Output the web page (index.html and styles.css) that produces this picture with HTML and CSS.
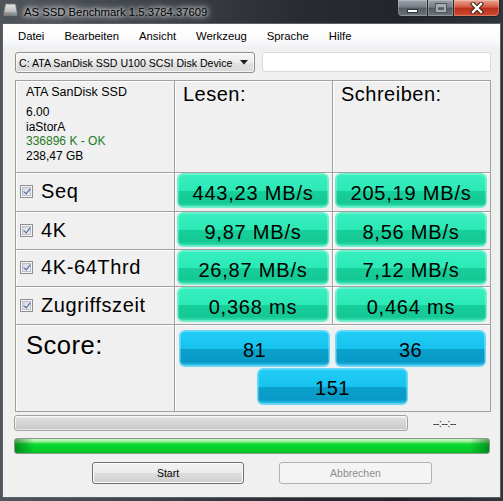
FILE: index.html
```html
<!DOCTYPE html>
<html>
<head>
<meta charset="utf-8">
<link rel="stylesheet" href="styles.css">
</head>
<body>
<div class="window">
  <div class="titlebar">
    <svg class="app-icon" width="15" height="14" viewBox="0 0 15 14">
      <defs>
        <linearGradient id="dg" x1="0" y1="0" x2="0" y2="1">
          <stop offset="0" stop-color="#e6e6e6"/>
          <stop offset="1" stop-color="#a9a9a9"/>
        </linearGradient>
      </defs>
      <path d="M2.5 1 H12.5 L14 9 V12.5 H1 V9 Z" fill="url(#dg)" stroke="#7a7a7a" stroke-width="0.8"/>
      <rect x="1.5" y="9.5" width="12" height="2.5" fill="#8a8a8a"/>
      <rect x="10.5" y="10.2" width="2" height="1" fill="#4fc3ff"/>
    </svg>
    <span class="title">AS SSD Benchmark 1.5.3784.37609</span>
    <div class="caption">
      <div class="cbtn min"><span class="min-glyph"></span></div>
      <div class="cbtn max"><span class="max-glyph"></span></div>
      <div class="cbtn close">
        <svg width="14" height="12" viewBox="0 0 14 12">
          <path d="M3 2 L11 10 M11 2 L3 10" stroke="#3a1d14" stroke-width="4.4" stroke-linecap="square"/>
          <path d="M3 2 L11 10 M11 2 L3 10" stroke="#ffffff" stroke-width="2.4" stroke-linecap="square"/>
        </svg>
      </div>
    </div>
  </div>
  <div class="client">
    <nav class="menubar">
      <span>Datei</span>
      <span>Bearbeiten</span>
      <span>Ansicht</span>
      <span>Werkzeug</span>
      <span>Sprache</span>
      <span>Hilfe</span>
    </nav>
    <div class="toolbar">
      <div class="combo">
        <span class="combo-text">C: ATA SanDisk SSD U100 SCSI Disk Device</span>
        <svg class="combo-arrow" width="8" height="5" viewBox="0 0 8 5"><path d="M0 0 H8 L4 4.5 Z" fill="#1a1a1a"/></svg>
      </div>
      <div class="textbox"></div>
    </div>
    <div class="grid">
      <div class="cell info">
        <div class="info-name">ATA SanDisk SSD</div>
        <div class="info-line first">6.00</div>
        <div class="info-line">iaStorA</div>
        <div class="info-line ok">336896 K - OK</div>
        <div class="info-line">238,47 GB</div>
      </div>
      <div class="cell head">Lesen:</div>
      <div class="cell head">Schreiben:</div>

      <div class="cell label"><span class="check"></span><span>Seq</span></div>
      <div class="cell result"><div class="res green">443,23 MB/s</div></div>
      <div class="cell result"><div class="res green">205,19 MB/s</div></div>

      <div class="cell label"><span class="check"></span><span>4K</span></div>
      <div class="cell result"><div class="res green">9,87 MB/s</div></div>
      <div class="cell result"><div class="res green">8,56 MB/s</div></div>

      <div class="cell label"><span class="check"></span><span>4K-64Thrd</span></div>
      <div class="cell result"><div class="res green">26,87 MB/s</div></div>
      <div class="cell result"><div class="res green">7,12 MB/s</div></div>

      <div class="cell label"><span class="check"></span><span>Zugriffszeit</span></div>
      <div class="cell result"><div class="res green">0,368 ms</div></div>
      <div class="cell result"><div class="res green">0,464 ms</div></div>

      <div class="cell score-label">Score:</div>
      <div class="cell score">
        <div class="res blue">81</div>
        <div class="res blue">36</div>
        <div class="res blue">151</div>
      </div>
    </div>
    <div class="progress-row">
      <div class="pbar grey"></div>
      <span class="time">--:--:--</span>
    </div>
    <div class="pbar green-bar"></div>
    <div class="buttons">
      <div class="btn">Start</div>
      <div class="btn disabled">Abbrechen</div>
    </div>
  </div>
</div>
</body>
</html>
```
FILE: styles.css
```css
* { box-sizing: border-box; }
html, body { margin: 0; padding: 0; }
body {
  width: 503px;
  height: 501px;
  overflow: hidden;
  background: #23272c;
  font-family: "Liberation Sans", Arial, sans-serif;
}
.window {
  width: 503px;
  height: 501px;
  display: flex;
  flex-direction: column;
  background: linear-gradient(90deg, #50555c 0%, #3e4349 30%, #282c31 60%, #22262b 80%, #30353b 100%);
}
.titlebar {
  flex: none;
  height: 24px;
  display: flex;
  align-items: flex-start;
}
.app-icon { flex: none; margin: 3px 0 0 3px; }
.title {
  margin: 5px 0 0 6px;
  font-size: 11.3px;
  line-height: 14px;
  color: #000;
  white-space: nowrap;
  text-shadow: 0 0 4px #fff, 0 0 7px rgba(255,255,255,.85), 0 0 12px rgba(255,255,255,.6);
}
.caption {
  margin-left: auto;
  margin-right: 3px;
  display: flex;
  height: 17px;
}
.cbtn {
  height: 17px;
  border: 1px solid #1f2327;
  border-top: none;
  display: flex;
  align-items: center;
  justify-content: center;
  box-shadow: inset 0 0 0 1px rgba(255,255,255,.25);
}
.min {
  width: 30px;
  border-right: none;
  border-radius: 0 0 0 5px;
  background: linear-gradient(#9aa1a8, #767d84 45%, #545b62 50%, #6c747c);
}
.max {
  width: 26px;
  border-right: none;
  background: linear-gradient(#9aa1a8, #767d84 45%, #545b62 50%, #6c747c);
}
.close {
  width: 47px;
  border-radius: 0 0 5px 0;
  background: linear-gradient(#e9a593, #d4593f 45%, #b8301a 50%, #cf4c30);
}
.min-glyph {
  width: 11px;
  height: 4px;
  margin-top: 5px;
  background: #fff;
  border: 1px solid #2e3236;
}
.max-glyph {
  width: 10px;
  height: 8px;
  border: 2px solid #a7adb3;
  border-top-width: 3px;
  box-shadow: 0 0 0 1px #50565c;
}
.client {
  flex: none;
  height: 473px;
  margin: 0 3px;
  background: #f0f0f0;
  box-shadow: 0 0 0 1px #5d6268;
}
.menubar {
  height: 24px;
  display: flex;
  gap: 20px;
  padding: 1px 0 0 15px;
  font-size: 11.3px;
  line-height: 23px;
  color: #000;
  background: linear-gradient(#ffffff, #fbfbfc 60%, #f1f2f4);
}
.toolbar {
  display: flex;
  gap: 7px;
  margin: 4px 0 0 12px;
  height: 21px;
}
.combo {
  width: 240px;
  height: 21px;
  border: 1px solid #8e8f8f;
  border-radius: 3px;
  background: linear-gradient(#f6f6f6, #ebebeb 50%, #e1e1e1 51%, #d9d9d9);
  display: flex;
  align-items: center;
  padding: 0 6px 0 3px;
  box-shadow: inset 0 0 0 1px rgba(255,255,255,.7);
}
.combo-text {
  font-size: 10.6px;
  color: #000;
  white-space: nowrap;
  overflow: hidden;
  flex: 1;
}
.combo-arrow { flex: none; margin-left: 4px; }
.textbox {
  width: 229px;
  height: 20px;
  background: #fff;
  border: 1px solid #d6d9dd;
  border-radius: 2px;
}
.grid {
  margin: 7px 0 0 12px;
  width: 476px;
  display: grid;
  grid-template-columns: 158px 157px 157px;
  grid-template-rows: 91px 38px 37px 36px 37px 86px;
  gap: 1px;
  padding: 1px;
  background: #a0a0a0;
}
.cell {
  background: #f0f0f0;
  box-shadow: inset 1px 1px 0 #fff;
}
.info { padding: 4px 0 0 10px; color: #000; }
.info-name { font-size: 12.5px; line-height: 15px; }
.info-line { font-size: 12px; line-height: 14.7px; }
.info-line.first { margin-top: 5px; }
.info-line.ok { color: #1d7a1d; }
.head {
  padding: 2px 0 0 8px;
  font-size: 20px;
  line-height: 23px;
  letter-spacing: 0.5px;
  color: #000;
}
.label {
  display: flex;
  align-items: center;
  padding: 0 0 1px 4px;
  gap: 8px;
  font-size: 20px;
  line-height: 23px;
  letter-spacing: 0.6px;
  color: #000;
}
.check {
  flex: none;
  width: 13px;
  height: 13px;
  border: 1px solid #8f8f8f;
  background: #f4f4f4;
  position: relative;
}
.check::before {
  content: "";
  position: absolute;
  left: 1px; top: 1px; right: 1px; bottom: 1px;
  background: linear-gradient(135deg, #d4d7e0, #f0f1f5);
  border: 1px solid #bcbfc8;
}
.check::after {
  content: "";
  position: absolute;
  left: 4px;
  top: 1px;
  width: 3px;
  height: 6px;
  border-right: 1.5px solid #4a5f9c;
  border-bottom: 1.5px solid #4a5f9c;
  transform: rotate(38deg);
}
.result { padding: 1px 4px 0 3px; }
.res {
  height: 33px;
  border-radius: 5px;
  text-align: center;
  font-size: 20px;
  line-height: 27px;
  padding-top: 6px;
  letter-spacing: 0.8px;
  color: #000;
  white-space: nowrap;
}
.green {
  background: linear-gradient(#38efc0 0%, #2be9b5 52%, #17cf9a 53%, #14c894 88%, #3ee6b7 100%);
  box-shadow: inset 0 0 0 1px rgba(255,255,255,.25), 0 0 0 1px #6cf0cc;
}
.score-label {
  padding: 5px 0 0 10px;
  font-size: 25.6px;
  line-height: 30px;
  letter-spacing: 0.5px;
  color: #000;
}
.score {
  grid-column: span 2;
  display: flex;
  flex-wrap: wrap;
  justify-content: center;
  align-content: flex-start;
  gap: 3px 7px;
  padding-top: 6px;
}
.blue {
  width: 149px;
  height: 35px;
  letter-spacing: 0.5px;
  background: linear-gradient(#22cdf6 0%, #17c3ee 50%, #0aa1cd 51%, #089ac6 88%, #35c8f0 100%);
  box-shadow: inset 0 0 0 1px rgba(255,255,255,.25), 0 0 0 1px #6ad8f8;
}
.progress-row {
  display: flex;
  align-items: center;
  margin: 3px 0 0 11px;
  height: 16px;
}
.pbar {
  height: 16px;
  border: 1px solid #a3a3a3;
  border-radius: 3px;
}
.grey {
  width: 394px;
  background: linear-gradient(#f3f3f3 0%, #dcdcdc 20%, #d2d2d2 60%, #c8c8c8 100%);
  box-shadow: inset 0 0 0 1px rgba(255,255,255,.6);
}
.time {
  margin-left: 25px;
  font-size: 10px;
  color: #222;
  letter-spacing: -0.3px;
}
.green-bar {
  width: 476px;
  margin: 7px 0 0 11px;
  background:
    linear-gradient(90deg, rgba(0,90,20,.55) 0%, rgba(0,90,20,0) 4%, rgba(0,90,20,0) 96%, rgba(0,90,20,.55) 100%),
    linear-gradient(#c9f7c4 0%, #9cf09a 18%, #13d934 35%, #00d22a 60%, #00c526 100%);
  border-color: #8a9a8a;
}
.buttons {
  display: flex;
  gap: 35px;
  margin: 8px 0 0 89px;
}
.btn {
  width: 152px;
  height: 22px;
  border: 1px solid #707070;
  border-radius: 3px;
  background: linear-gradient(#f2f2f2 0%, #ebebeb 50%, #dddddd 51%, #cfcfcf 100%);
  box-shadow: inset 0 0 0 1px #fbfbfb;
  font-size: 10.5px;
  line-height: 20px;
  text-align: center;
  color: #000;
}
.btn.disabled {
  width: 153px;
  border-color: #adb2b5;
  background: #f4f4f4;
  box-shadow: none;
  color: #8d8d8d;
}
```
